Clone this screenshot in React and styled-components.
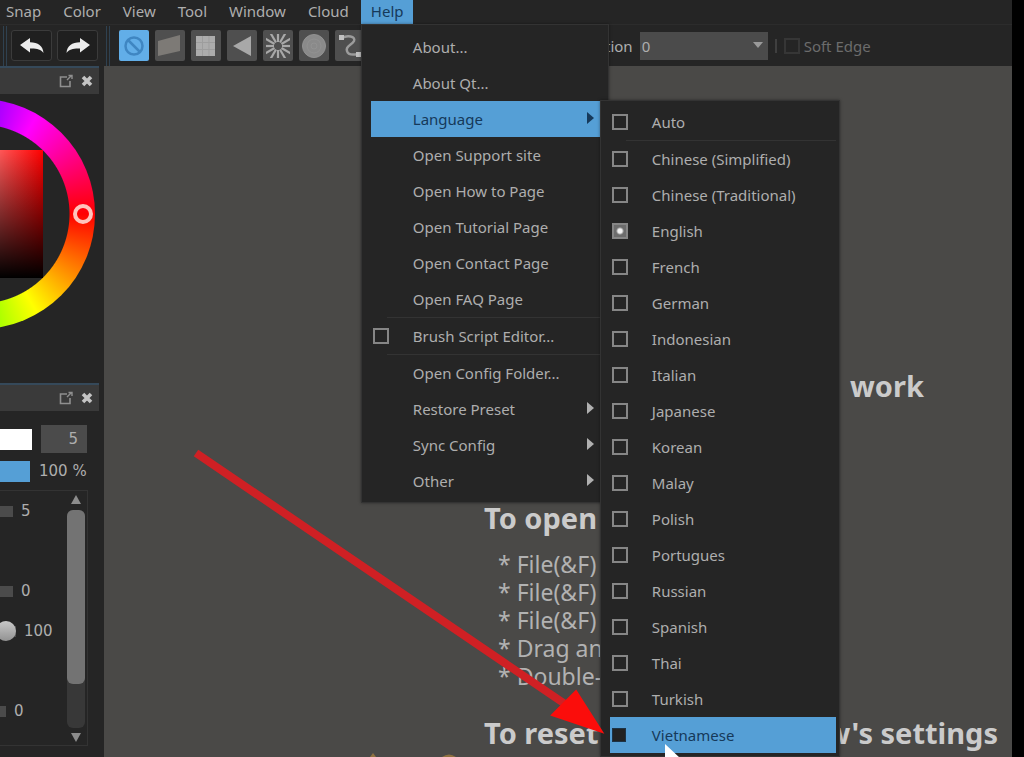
import React from 'react'
import styled, { createGlobalStyle, css } from 'styled-components'

/**
 * Style
 */
const UI = {
  bg: '#252525',
  line: '#333333',
  canvas: '#4a4947',
  header: '#3a3a3a',
  field: '#4b4b4b',
  text: '#aeaeae',
  blue: '#559fd6',
  navy: '#16395a',
  font: "'Noto Sans', 'Open Sans', sans-serif",
}

const GlobalStyle = createGlobalStyle`
  * {
    box-sizing: border-box;
  }
  body {
    margin: 0;
    background: #000;
    color: ${UI.text};
    font: 15px/20px ${UI.font};
  }
  button, input, select {
    margin: 0;
    font: inherit;
    color: inherit;
  }
`
const Window = styled.div`
  position: relative;
  display: flex;
  flex-direction: column;
  height: 100vh;
  margin-right: 12px;
  overflow: hidden;
  background: ${UI.bg};
`
const MenuBar = styled.nav`
  display: flex;
  gap: 2px;
  height: 24px;
  margin-left: -4px;
`
const MenuBarItem = styled.div`
  position: relative;
`
const MenuBarButton = styled.button`
  height: 24px;
  padding: 0 10px 2px;
  border: 0;
  background: ${({ $open }) => ($open ? UI.blue : 'transparent')};
  color: ${({ $open }) => ($open ? UI.navy : UI.text)};
`
const Menu = styled.ul`
  position: absolute;
  z-index: 2;
  margin: 0;
  list-style: none;
  border: 1px solid ${UI.line};
  background: ${UI.bg};
  box-shadow: 0 0 3px rgba(0, 0, 0, 0.4);
`
const HelpMenu = styled(Menu)`
  top: 100%;
  left: 0;
  width: 248px;
  padding: 4px 8px 3px 9px;
`
const LanguageMenu = styled(Menu)`
  top: -1px;
  left: 100%;
  width: 240px;
  padding: 3px 3px 3px 9px;
`
const MenuItem = styled.li`
  position: relative;
`
const itemStyle = css`
  display: grid;
  grid-template-columns: 40px 1fr 12px;
  align-items: center;
  width: 100%;
  height: 36px;
  padding: 0 2px;
  border: 0;
  text-align: left;
  white-space: nowrap;
  background: ${({ $active }) => ($active ? UI.blue : 'transparent')};
  color: ${({ $active }) => ($active ? UI.navy : UI.text)};
`
const MenuAction = styled.button`
  ${itemStyle}
`
const MenuCheck = styled.label`
  ${itemStyle}
`
const MenuLabel = styled.span`
  grid-column: 2;
`
const Separator = styled.li`
  height: 1px;
  margin-left: 16px;
  background: ${UI.line};
`
const Check = styled.input`
  appearance: none;
  width: 16px;
  height: 16px;
  border: 2px solid ${({ $dim }) => ($dim ? '#363636' : '#868686')};
  &:checked {
    background: radial-gradient(#f0f0f0 0 2px, #6c6c6c 4px);
  }
  ${({ $active }) =>
    $active &&
    css`
      width: 14px;
      height: 14px;
      border: 1px solid #1d3346;
      background: #222;
    `}
`
const ToolBar = styled.div`
  display: flex;
  align-items: center;
  height: 42px;
  padding-left: 3px;
  border-top: 1px solid #2c2c2c;
`
const Grip = styled.span`
  width: 4px;
  height: 40px;
  border-left: 1px solid #2f4150;
  border-right: 1px solid #2f4150;
`
const HistoryButtons = styled.div`
  display: flex;
  gap: 5px;
  padding: 0 8px 0 4px;
`
const HistoryButton = styled.button`
  display: grid;
  place-items: center;
  width: 41px;
  height: 31px;
  padding: 0;
  border: 1px solid #3b3b3b;
  border-radius: 3px;
  background: #1f1f1f;
`
const SnapButtons = styled.div`
  display: flex;
  gap: 6px;
  padding-left: 9px;
`
const SnapButton = styled.button`
  display: grid;
  place-items: center;
  width: 30px;
  height: 31px;
  padding: 0;
  border: 0;
  border-radius: 2px;
  background: ${({ $active }) => ($active ? '#62aee8' : '#4f4f4f')};
`
const ToolOptions = styled.div`
  display: flex;
  align-items: center;
  gap: 7px;
  padding-left: 240px;
`
const SelectBox = styled.div`
  position: relative;
  display: flex;
`
const Select = styled.select`
  appearance: none;
  width: 128px;
  height: 28px;
  padding: 0 2px;
  border: 0;
  background: ${UI.field};
`
const SelectArrow = styled.svg`
  position: absolute;
  top: 10px;
  right: 5px;
`
const OptionDivider = styled.span`
  width: 2px;
  height: 14px;
  background: #3f3f3f;
`
const SoftEdge = styled.label`
  display: flex;
  align-items: center;
  gap: 4px;
  color: #6c6c6c;
`
const Body = styled.div`
  display: flex;
  flex: 1;
  min-height: 0;
`
const SideBar = styled.aside`
  width: 104px;
  padding-right: 5px;
  overflow: hidden;
`
const PanelHeader = styled.header`
  display: flex;
  justify-content: flex-end;
  align-items: center;
  gap: 8px;
  height: 28px;
  padding-right: 6px;
  border-top: 2px solid #35495a;
  background: ${UI.header};
`
const IconButton = styled.button`
  display: flex;
  padding: 0;
  border: 0;
  background: none;
`
const WheelArea = styled.div`
  height: 289px;
  padding-top: 5px;
`
const Wheel = styled.div`
  display: grid;
  place-items: center;
  position: relative;
  width: 230px;
  height: 230px;
  margin-left: -135px;
  border-radius: 50%;
  background:
    radial-gradient(${UI.bg} 89px, transparent 90px),
    conic-gradient(from 90deg, red, #ff0, lime, cyan, blue, magenta, red);
`
const Shade = styled.div`
  width: 126px;
  height: 128px;
  background:
    linear-gradient(transparent, #000),
    linear-gradient(to right, #fff, red);
`
const HueMarker = styled.span`
  position: absolute;
  top: 105px;
  right: 2px;
  width: 20px;
  height: 20px;
  border: 4px solid #ffc4bc;
  border-radius: 50%;
`
const BrushPanel = styled.div`
  font: 15px/20px 'DejaVu Sans', sans-serif;
`
const BrushRow = styled.div`
  display: flex;
  align-items: center;
  height: 32px;
  gap: 9px;
`
const BrushRows = styled.div`
  padding: 12px 12px 3px 0;
`
const Bar = styled.input`
  appearance: none;
  width: ${({ $width }) => $width}px;
  height: 21px;
  background: ${({ $color }) => $color};
  &::-webkit-slider-thumb {
    appearance: none;
    width: 0;
  }
`
const SizeField = styled.input`
  width: 46px;
  height: 28px;
  padding: 0 9px;
  border: 0;
  background: ${UI.field};
  text-align: right;
`
const Percent = styled.output`
  white-space: nowrap;
`
const Scroller = styled.div`
  display: flex;
  height: 256px;
  margin-right: 11px;
  border: 1px solid ${UI.line};
  border-left: 0;
`
const Params = styled.div`
  display: grid;
  flex: 1;
  grid-template-rows: repeat(6, 40px);
`
const Param = styled.label`
  display: flex;
  align-items: center;
  gap: 8px;
  grid-row: ${({ $row }) => $row};
`
const Groove = styled.input`
  appearance: none;
  width: ${({ $width }) => $width}px;
  height: 20px;
  background: linear-gradient(${UI.field}, ${UI.field}) center / 100% 11px no-repeat;
  &::-webkit-slider-thumb {
    appearance: none;
    width: ${({ $knob }) => ($knob ? 20 : 0)}px;
    height: 20px;
    border-radius: 50%;
    background: linear-gradient(#c8c8c8, #929292);
  }
`
const ScrollBar = styled.div`
  display: flex;
  flex-direction: column;
  align-items: center;
  width: 22px;
  padding: 3px 2px 1px;
`
const ScrollTrack = styled.div`
  flex: 1;
  width: 18px;
  margin: 2px 0;
  border-radius: 6px;
  background: #383838;
`
const ScrollThumb = styled.div`
  height: 80%;
  border-radius: 6px;
  background: #737373;
`
const Canvas = styled.main`
  flex: 1;
  padding: 300px 14px 0 380px;
  background: ${UI.canvas};
  color: #cbcbcb;
`
const Heading = styled.h2`
  display: flex;
  justify-content: ${({ $side }) => ($side ? 'flex-start' : 'space-between')};
  margin: 0;
  padding-left: ${({ $side }) => ($side ? 366 : 0)}px;
  font: bold 29px/40px ${UI.font};
  white-space: nowrap;
`
const Section = styled.section`
  padding-bottom: ${({ $gap }) => $gap}px;
`
const Steps = styled.ul`
  margin: 0;
  padding: 12px 0 0 14px;
  list-style: none;
  font: 23px/28px ${UI.font};
  color: #b2b2b2;
`
const Step = styled.li`
  display: flex;
  gap: 6px;
  &::before {
    content: '*';
  }
`
const Peaks = styled.svg`
  display: block;
  margin-left: -116px;
`
const Arrow = styled.svg`
  position: absolute;
  z-index: 3;
  top: 440px;
  left: 185px;
`
const Cursor = styled.svg`
  position: absolute;
  z-index: 4;
  top: 743px;
  left: 664px;
`

/**
 * Icons
 */
const Undo = ({ flip }) => (
  <svg width="28" height="20" viewBox="0 0 28 20">
    <path
      transform={flip ? 'translate(28 0) scale(-1 1)' : undefined}
      d="M2 9 12 2v4.300c8 0 13 3.500 13.500 10.700-3-4-7-4.700-13.500-4.500v4z"
      fill="#ededed"
    />
  </svg>
)
const Detach = () => (
  <svg width="14" height="14" viewBox="0 0 14 14" fill="none" stroke="#8f8f8f">
    <path d="M8 3H1.500v9.500H11V7" strokeWidth="1.600" />
    <path d="M8 6l4-4M9.500 1.500h3.500V5" strokeWidth="1.400" />
  </svg>
)
const Close = () => (
  <svg width="12" height="12" viewBox="0 0 12 12">
    <path d="M2 2l8 8M10 2l-8 8" stroke="#c4c4c4" strokeWidth="3.600" />
  </svg>
)
const Triangle = ({ d, color = '#b0b0b0' }) => (
  <svg width="10" height="14" viewBox="0 0 10 14">
    <path d={d} fill={color} />
  </svg>
)

const rays = Array.from({ length: 12 }, (_, i) => i * 30)
const snaps = [
  {
    name: 'Snap off',
    icon: (
      <g fill="none" stroke="#3f86c2" strokeWidth="2.500">
        <circle cx="15" cy="15" r="8.500" />
        <path d="M9 9l12 12" />
      </g>
    ),
  },
  {
    name: 'Parallel snap',
    icon: <path d="M3 10 25 4v16L3 25z" fill="#7d7a76" />,
  },
  {
    name: 'Crisscross snap',
    icon: (
      <g>
        <path d="M5 5h19v20H5z" fill="#acacac" />
        <path d="M11.500 5v20M18 5v20M5 11.500h19M5 18.500h19" stroke="#9d9d9d" />
      </g>
    ),
  },
  {
    name: 'Vanishing point snap',
    icon: <path d="M6 15 24 5v20z" fill="#a8a8a8" />,
  },
  {
    name: 'Radial snap',
    icon: (
      <g stroke="#a8a8a8" strokeWidth="2.200">
        <clipPath id="rays">
          <path d="M3 3h24v24H3z" />
        </clipPath>
        <g clipPath="url(#rays)">
          {rays.map((angle) => (
            <path key={angle} d="M15 0v11" transform={`rotate(${angle} 15 15)`} />
          ))}
        </g>
      </g>
    ),
  },
  {
    name: 'Circle snap',
    icon: (
      <g fill="#8a8a8a" stroke="#929292">
        <circle cx="15" cy="15" r="11.500" />
        <circle cx="15" cy="15" r="7" />
        <circle cx="15" cy="15" r="3" />
      </g>
    ),
  },
  {
    name: 'Curve snap',
    icon: (
      <g fill="#c0c0c0">
        <path
          d="M7 7c5-3 14-2 12 3-2 4-9 5-7 10 1 4 6 4 11 3"
          fill="none"
          stroke="#9c9c9c"
          strokeWidth="2.500"
        />
        <path d="M4 4h5v5H4zM21 21h5v5h-5z" />
      </g>
    ),
  },
]

/**
 * Content
 */
const menus = ['Snap', 'Color', 'View', 'Tool', 'Window', 'Cloud']
const languages = [
  'Chinese (Simplified)',
  'Chinese (Traditional)',
  'English',
  'French',
  'German',
  'Indonesian',
  'Italian',
  'Japanese',
  'Korean',
  'Malay',
  'Polish',
  'Portugues',
  'Russian',
  'Spanish',
  'Thai',
  'Turkish',
  'Vietnamese',
]
const right = 'M1 0l7 6-7 6z'

/**
 * Component
 */
const Action = ({ children, sub }) => (
  <MenuItem>
    <MenuAction type="button">
      <MenuLabel>{children}</MenuLabel>
      {sub && <Triangle d={right} />}
    </MenuAction>
  </MenuItem>
)

const CheckItem = ({ children, active, checked }) => (
  <MenuItem>
    <MenuCheck $active={active}>
      <Check type="checkbox" $active={active} defaultChecked={checked} />
      <MenuLabel>{children}</MenuLabel>
    </MenuCheck>
  </MenuItem>
)

const Help = () => (
  <MenuBarItem>
    <MenuBarButton type="button" $open>
      Help
    </MenuBarButton>
    <HelpMenu>
      <Action>About...</Action>
      <Action>About Qt...</Action>
      <MenuItem>
        <MenuAction type="button" $active>
          <MenuLabel>Language</MenuLabel>
          <Triangle d={right} color={UI.navy} />
        </MenuAction>
        <LanguageMenu>
          <CheckItem>Auto</CheckItem>
          <Separator />
          {languages.map((language) => (
            <CheckItem
              key={language}
              checked={language === 'English'}
              active={language === 'Vietnamese'}
            >
              {language}
            </CheckItem>
          ))}
        </LanguageMenu>
      </MenuItem>
      <Action>Open Support site</Action>
      <Action>Open How to Page</Action>
      <Action>Open Tutorial Page</Action>
      <Action>Open Contact Page</Action>
      <Action>Open FAQ Page</Action>
      <Separator />
      <CheckItem>Brush Script Editor...</CheckItem>
      <Separator />
      <Action>Open Config Folder...</Action>
      <Action sub>Restore Preset</Action>
      <Action sub>Sync Config</Action>
      <Action sub>Other</Action>
    </HelpMenu>
  </MenuBarItem>
)

const PanelTitle = () => (
  <PanelHeader>
    <IconButton type="button" aria-label="Detach">
      <Detach />
    </IconButton>
    <IconButton type="button" aria-label="Close">
      <Close />
    </IconButton>
  </PanelHeader>
)

const Tools = () => (
  <ToolBar>
    <Grip />
    <HistoryButtons>
      <HistoryButton type="button" aria-label="Undo">
        <Undo />
      </HistoryButton>
      <HistoryButton type="button" aria-label="Redo">
        <Undo flip />
      </HistoryButton>
    </HistoryButtons>
    <Grip />
    <SnapButtons>
      {snaps.map(({ name, icon }, i) => (
        <SnapButton key={name} type="button" aria-label={name} $active={i === 0}>
          <svg width="30" height="30" viewBox="0 0 30 30">
            {icon}
          </svg>
        </SnapButton>
      ))}
    </SnapButtons>
    <ToolOptions>
      <label htmlFor="level">tion</label>
      <SelectBox>
        <Select id="level">
          <option>0</option>
        </Select>
        <SelectArrow width="10" height="6" viewBox="0 0 10 6">
          <path d="M0 0h10L5 6z" fill="#9a9a9a" />
        </SelectArrow>
      </SelectBox>
      <OptionDivider />
      <SoftEdge>
        <Check type="checkbox" $dim />
        Soft Edge
      </SoftEdge>
    </ToolOptions>
  </ToolBar>
)

const Sliders = () => (
  <Scroller>
    <Params>
      <Param $row={1}>
        <Groove type="range" $width={13} />5
      </Param>
      <Param $row={3}>
        <Groove type="range" $width={13} />0
      </Param>
      <Param $row={4}>
        <Groove type="range" $width={16} $knob defaultValue={100} />
        100
      </Param>
      <Param $row={6}>
        <Groove type="range" $width={6} />0
      </Param>
    </Params>
    <ScrollBar>
      <Triangle d="M5 1l5 9H0z" color="#8c8c8c" />
      <ScrollTrack>
        <ScrollThumb />
      </ScrollTrack>
      <Triangle d="M0 3h10l-5 9z" color="#8c8c8c" />
    </ScrollBar>
  </Scroller>
)

const App = () => (
  <Window>
    <GlobalStyle />
    <MenuBar>
      {menus.map((menu) => (
        <MenuBarItem key={menu}>
          <MenuBarButton type="button">{menu}</MenuBarButton>
        </MenuBarItem>
      ))}
      <Help />
    </MenuBar>
    <Tools />
    <Body>
      <SideBar>
        <PanelTitle />
        <WheelArea>
          <Wheel>
            <Shade />
            <HueMarker />
          </Wheel>
        </WheelArea>
        <PanelTitle />
        <BrushPanel>
          <BrushRows>
            <BrushRow>
              <Bar type="range" aria-label="Brush size" $width={32} $color="#fff" />
              <SizeField aria-label="Brush width" defaultValue="5" />
            </BrushRow>
            <BrushRow>
              <Bar type="range" aria-label="Opacity" $width={30} $color={UI.blue} />
              <Percent>100 %</Percent>
            </BrushRow>
          </BrushRows>
          <Sliders />
        </BrushPanel>
      </SideBar>
      <Canvas>
        <Section $gap={92}>
          <Heading $side>work</Heading>
        </Section>
        <Section $gap={23}>
          <Heading>To open</Heading>
          <Steps>
            <Step>File(&amp;F)</Step>
            <Step>File(&amp;F)</Step>
            <Step>File(&amp;F)</Step>
            <Step>Drag and</Step>
            <Step>Double-c</Step>
          </Steps>
        </Section>
        <Heading>
          <span>To reset</span>
          <span>w's settings</span>
        </Heading>
        <Peaks width="100" height="4" viewBox="0 0 100 4">
          <path d="M2 4 5 0l3 4zM74 4q7-5 14 0z" fill="#8f7140" />
        </Peaks>
      </Canvas>
    </Body>
    <Arrow width="420" height="300" viewBox="0 0 420 300">
      <path d="M11 13 380 264" stroke="#cf2024" strokeWidth="8" />
      <path d="M391 251 417 292 367 275z" fill="#fb0d0b" stroke="#fb0d0b" strokeWidth="2" />
    </Arrow>
    <Cursor width="16" height="22" viewBox="0 0 16 22">
      <path d="M1 1v19l5-4 3 6 4-2-3-5h6z" fill="#fff" />
    </Cursor>
  </Window>
)

export default App
